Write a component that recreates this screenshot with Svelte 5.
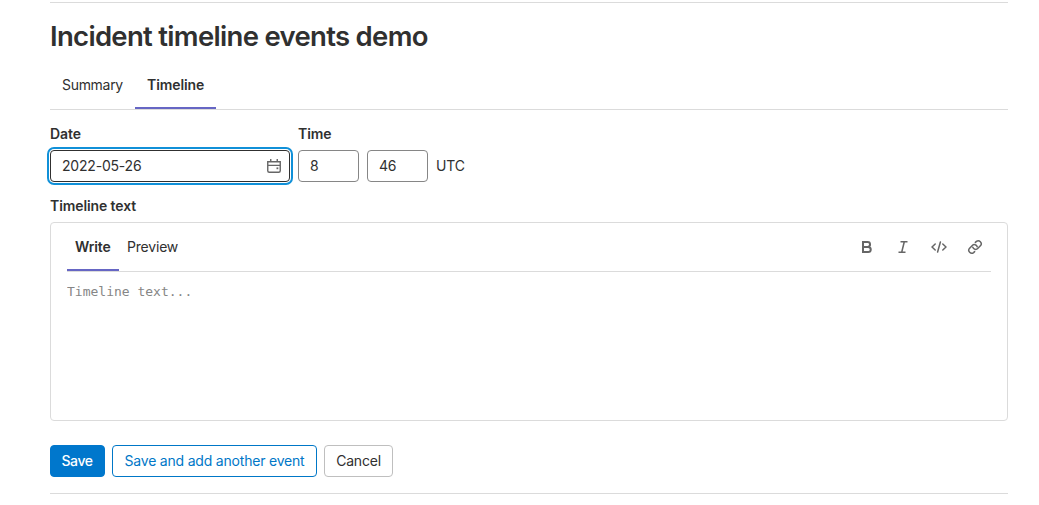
<script>
  let tab = $state('Timeline');
  let mode = $state('Write');
  let date = $state('2022-05-26');
  let hour = $state('8');
  let minute = $state('46');
  let text = $state('');
</script>

<main>
  <h1><span>Incident timeline events demo</span></h1>

  <nav class="tabs">
    {#each ['Summary', 'Timeline'] as name}
      <button class="tab {name.toLowerCase()}" class:active={tab === name} onclick={() => (tab = name)}><span>{name}</span></button>
    {/each}
  </nav>

  <form onsubmit={(e) => e.preventDefault()}>
    <div class="when">
      <div class="group">
        <label for="date"><span>Date</span></label>
        <div class="date">
          <input id="date" bind:value={date} />
          <svg width="16" height="16" viewBox="0 0 16 16" fill="none" stroke="currentColor" stroke-width="1.4">
            <path d="M1.75 3.75h12.5v9q0 1.5-1.5 1.5h-9.5q-1.5 0-1.5-1.5zM1.75 7.4h12.5M4.75 4V1M11.25 4V1" />
            <path d="M10.5 10.3h1.8" stroke-width="1.8" />
          </svg>
        </div>
      </div>
      <div class="group">
        <label for="hour"><span>Time</span></label>
        <div class="time">
          <input id="hour" bind:value={hour} />
          <input bind:value={minute} />
          <span class="utc">UTC</span>
        </div>
      </div>
    </div>

    <label class="text-label" for="text"><span>Timeline text</span></label>
    <section class="editor">
      <header>
        {#each ['Write', 'Preview'] as name}
          <button type="button" class="mode {name.toLowerCase()}" class:active={mode === name} onclick={() => (mode = name)}><span>{name}</span></button>
        {/each}
        <div class="tools">
          <svg width="16" height="16" viewBox="0 0 16 16" fill="none" stroke="currentColor" stroke-width="2">
            <path d="M4 3h4.6a2.4 2.4 0 0 1 0 4.9H4zM4 7.9h5.2a2.55 2.55 0 0 1 0 5.1H4z" />
          </svg>
          <svg width="16" height="16" viewBox="0 0 16 16" fill="none" stroke="currentColor" stroke-width="1.5">
            <path d="M5.5 2.75h7M3.5 13.25h7M9.3 2.75l-2.6 10.5" />
          </svg>
          <svg width="16" height="16" viewBox="0 0 16 16" fill="none" stroke="currentColor" stroke-width="1.5" stroke-linecap="round" stroke-linejoin="round">
            <path d="M4.2 5L1 8l3.2 3M11.8 5L15 8l-3.2 3M9.4 3L6.6 13" />
          </svg>
          <svg width="16" height="16" viewBox="0 0 16 16" fill="none" stroke="currentColor" stroke-width="1.5" stroke-linecap="round">
            <path d="M8.4 3.4l1-1a3 3 0 0 1 4.2 4.2L10.7 9.500a2.95 2.95 0 0 1-4.900-1.200" />
            <path d="M7.6 12.6l-1 1a3 3 0 0 1-4.200-4.200L5.300 6.500a2.950 2.950 0 0 1 4.900 1.200" />
          </svg>
        </div>
      </header>
      <textarea id="text" placeholder="Timeline text..." bind:value={text}></textarea>
    </section>

    <div class="actions">
      <button class="btn primary"><span>Save</span></button>
      <button class="btn outline"><span>Save and add another event</span></button>
      <button class="btn cancel" type="button"><span>Cancel</span></button>
    </div>
  </form>
</main>

<style>
  :global(body) { background: #fff; }
  main, main * { box-sizing: border-box; }
  main {
    margin: 2px 31px 0 50px;
    width: 958px;
    height: 492px;
    border-top: 1px solid #dbdbdb;
    border-bottom: 1px solid #dbdbdb;
    font: 14px/20px Inter, sans-serif;
    letter-spacing: -0.2px;
    color: #303030;
  }
  button, input, textarea { font: inherit; letter-spacing: inherit; color: inherit; margin: 0; }
  button { background: none; border: 0; padding: 0; white-space: nowrap; }
  h1 {
    margin: 0;
    padding-top: 15px;
    height: 59px;
    font-size: 27.5px;
    line-height: 36px;
    font-weight: 600;
    letter-spacing: -0.69px;
  }
  .tabs { display: flex; height: 48px; border-bottom: 1px solid #dbdbdb; }
  .tab { padding: 1px 12px 0; border-bottom: 2px solid transparent; }
  .summary { width: 85px; padding-right: 13px; letter-spacing: -0.3px; }
  .timeline { width: 81px; padding-right: 13px; }
  .active { font-weight: 600; letter-spacing: -0.1px; border-bottom-color: #6666c4; }
  label { display: block; font-weight: 600; letter-spacing: -0.1px; }
  .when { display: flex; gap: 8px; padding-top: 14px; }
  .group label { margin-bottom: 6px; }
  input {
    height: 32px;
    padding: 0 11px 1px;
    border: 1px solid #868686;
    border-radius: 4px;
    outline: 0;
    background: #fff;
  }
  .date { display: grid; width: 240px; align-items: center; }
  .date input {
    grid-area: 1 / 1;
    width: 100%;
    border-color: #303030;
    box-shadow: 0 0 0 1px #fff, 0 0 0 3px #1090d8;
  }
  .date svg { grid-area: 1 / 1; justify-self: end; margin-right: 8px; color: #666; }
  .time { display: flex; gap: 8px; align-items: center; }
  .time input { width: 61px; }
  .text-label { padding-top: 14px; }
  .editor {
    height: 199px;
    margin-top: 6px;
    padding: 0 16px;
    border: 1px solid #dbdbdb;
    border-radius: 4px;
  }
  header { display: flex; height: 49px; border-bottom: 1px solid #dbdbdb; }
  .mode { padding: 2px 8px 0; border-bottom: 2px solid transparent; }
  .mode.active { border-bottom-color: #6666c4; }
  .write { width: 52px; padding-right: 9px; }
  .tools { display: flex; gap: 20px; align-items: center; margin-left: auto; padding-right: 8px; color: #666; }
  textarea {
    display: block;
    width: 100%;
    height: 140px;
    padding: 10px 0;
    border: 0;
    outline: 0;
    resize: none;
    background: none;
    font: 13px/20px "DejaVu Sans Mono", monospace;
    letter-spacing: 0;
  }
  textarea::placeholder { color: #868686; opacity: 1; }
  .actions { display: flex; gap: 7px; margin-top: 24px; }
  .btn { height: 32px; border: 1px solid; border-radius: 4px; }
  .primary { width: 55px; padding-right: 1px; background: #0077cc; border-color: #0077cc; color: #fff; font-weight: 500; letter-spacing: -0.4px; }
  .outline { width: 205px; border-color: #0077c7; color: #0077c7; }
  .cancel { width: 69px; border-color: #bfbfbf; }
</style>
